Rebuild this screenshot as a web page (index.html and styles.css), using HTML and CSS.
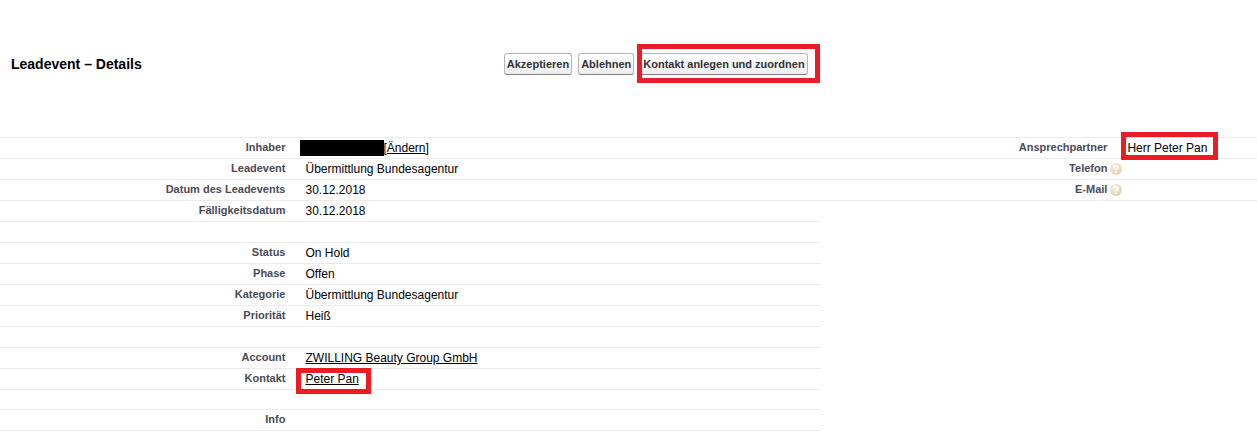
FILE: index.html
```html
<!DOCTYPE html>
<html lang="de">
<head>
  <meta charset="UTF-8" />
  <meta name="viewport" content="width=device-width, initial-scale=1" />
  <title>Leadevent – Details</title>
  <link rel="stylesheet" href="styles.css">
</head>
<body>
  <svg class="sprite" aria-hidden="true">
    <defs>
      <radialGradient id="help-fill" cx="40%" cy="30%" r="75%">
        <stop offset="0" stop-color="#f8eeda" />
        <stop offset="1" stop-color="#e3cfae" />
      </radialGradient>
      <symbol id="help" viewBox="0 0 12 12">
        <circle cx="6" cy="6" r="6" fill="url(#help-fill)" />
        <path d="M4 4.6C4 2.4 8 2.4 8 4.6C8 5.8 6 5.8 6 7.3" fill="none" stroke="#fff" stroke-width="1.6" />
        <circle cx="6" cy="9.2" r="0.9" fill="#fff" />
      </symbol>
    </defs>
  </svg>

  <header class="page-header">
    <h1>Leadevent – Details</h1>
    <div class="actions">
      <button type="button" class="btn">Akzeptieren</button>
      <button type="button" class="btn">Ablehnen</button>
      <span class="marked marked-button"><button type="button" class="btn">Kontakt anlegen und zuordnen</button></span>
    </div>
  </header>

  <main class="details">
    <table class="fields fields-main">
      <tr><th scope="row">Inhaber</th><td><span class="redacted"></span>[<a href="#">Ändern</a>]</td></tr>
      <tr><th scope="row">Leadevent</th><td>Übermittlung Bundesagentur</td></tr>
      <tr><th scope="row">Datum des Leadevents</th><td>30.12.2018</td></tr>
      <tr><th scope="row">Fälligkeitsdatum</th><td>30.12.2018</td></tr>
      <tr><td colspan="2"></td></tr>
      <tr><th scope="row">Status</th><td>On Hold</td></tr>
      <tr><th scope="row">Phase</th><td>Offen</td></tr>
      <tr><th scope="row">Kategorie</th><td>Übermittlung Bundesagentur</td></tr>
      <tr><th scope="row">Priorität</th><td>Heiß</td></tr>
      <tr><td colspan="2"></td></tr>
      <tr><th scope="row">Account</th><td><a href="#">ZWILLING Beauty Group GmbH</a></td></tr>
      <tr><th scope="row">Kontakt</th><td><span class="marked marked-link"><a href="#">Peter Pan</a></span></td></tr>
      <tr class="spacer"><td colspan="2"></td></tr>
      <tr><th scope="row">Info</th><td></td></tr>
    </table>

    <table class="fields fields-contact">
      <tr><th scope="row">Ansprechpartner</th><td><span class="marked marked-name">Herr Peter Pan</span></td></tr>
      <tr><th scope="row">Telefon<svg class="help"><use href="#help" /></svg></th><td></td></tr>
      <tr><th scope="row">E-Mail<svg class="help"><use href="#help" /></svg></th><td></td></tr>
    </table>
  </main>
</body>
</html>
```
FILE: styles.css
```css
* {
  box-sizing: border-box;
}
body {
  margin: 0;
  background: #fff;
  color: #000;
  font-family: Arial, "Liberation Sans", sans-serif;
  font-size: 12px;
}
a {
  color: #000;
  text-decoration: underline;
}
.sprite {
  position: absolute;
  width: 0;
  height: 0;
}

/* title and buttons */
.page-header {
  display: flex;
  align-items: center;
  padding-top: 53px;
}
h1 {
  flex: none;
  width: 40%;
  margin: 0;
  padding-left: 11px;
  font-size: 14px;
  line-height: 22px;
}
.actions {
  display: flex;
  gap: 6px;
  padding-left: 1px;
}
.btn {
  display: block;
  height: 22px;
  padding: 0 2px;
  border: 1px solid #b5b5b5;
  border-bottom-color: #7f7f7f;
  border-radius: 3px;
  background: linear-gradient(#fff, #ededed);
  color: #333;
  font-family: inherit;
  font-size: 11px;
  font-weight: bold;
  line-height: 20px;
  white-space: nowrap;
  cursor: pointer;
}

/* field lists */
.details {
  display: flex;
  align-items: flex-start;
  margin-top: 62px;
}
.fields {
  border-collapse: separate;
  border-spacing: 0;
  border-top: 1px solid #ebebeb;
  table-layout: fixed;
}
.fields-main {
  width: 65.3%;
}
.fields-contact {
  flex: 1;
}
.fields th,
.fields td {
  height: 21px;
  border-bottom: 1px solid #ebebeb;
  line-height: 20px;
  vertical-align: top;
}
.fields th {
  position: relative;
  width: 36%;
  padding: 0 10px 0 0;
  color: #4a4a56;
  font-size: 11px;
  line-height: 18px;
  text-align: right;
}
.fields-contact th {
  width: 68%;
}
.fields td {
  padding: 0 0 0 10px;
}
.fields .spacer td {
  height: 20px;
}
.help {
  position: absolute;
  top: 4px;
  right: -5px;
  width: 12px;
  height: 12px;
}
.redacted {
  display: inline-block;
  width: 84px;
  height: 16px;
  margin: 0 -1px 0 -5px;
  background: #000;
  vertical-align: -4px;
}

/* red highlight frames */
.marked {
  position: relative;
}
.marked::after {
  content: "";
  position: absolute;
  border: 5px solid #ed1c24;
  pointer-events: none;
}
.marked-button::after {
  inset: -9px -12px -8px -3px;
}
.marked-link::after {
  inset: -4px -12px -8px -9px;
}
.marked-name::after {
  inset: -9px -11px -5px -6px;
}
```
